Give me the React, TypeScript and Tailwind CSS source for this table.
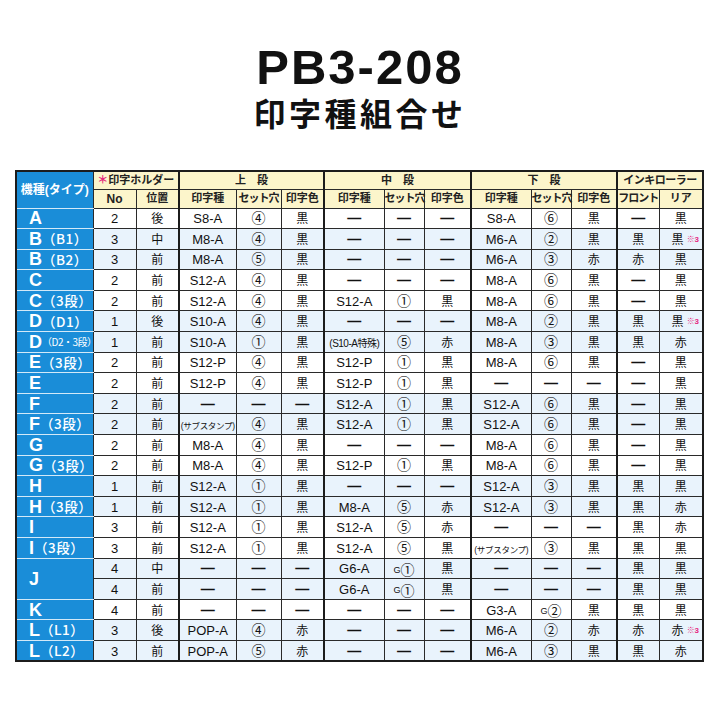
import React from "react";

const widths = [77, 43, 43, 57, 45, 43, 60, 40, 47, 60, 40, 46, 42, 44];
const thickCols = [3, 6, 9, 12];

type Row = [string | null, string, "w" | "b", ...string[]];

const rows: Row[] = [
    ["A", "", "w", "2", "後", "S8-A", "④", "黒", "—", "—", "—", "S8-A", "⑥", "黒", "—", "黒"],
    ["B", "（B1）", "b", "3", "中", "M8-A", "④", "黒", "—", "—", "—", "M6-A", "②", "黒", "黒", "黒※3"],
    ["B", "（B2）", "b", "3", "前", "M8-A", "⑤", "黒", "—", "—", "—", "M6-A", "③", "赤", "赤", "黒"],
    ["C", "", "w", "2", "前", "S12-A", "④", "黒", "—", "—", "—", "M8-A", "⑥", "黒", "—", "黒"],
    ["C", "（3段）", "w", "2", "前", "S12-A", "④", "黒", "S12-A", "①", "黒", "M8-A", "⑥", "黒", "—", "黒"],
    ["D", "（D1）", "b", "1", "後", "S10-A", "④", "黒", "—", "—", "—", "M8-A", "②", "黒", "黒", "黒※3"],
    ["D", "（D2・3段）", "b", "1", "前", "S10-A", "①", "黒", "(S10-A特殊)", "⑤", "赤", "M8-A", "③", "黒", "黒", "赤"],
    ["E", "（3段）", "w", "2", "前", "S12-P", "④", "黒", "S12-P", "①", "黒", "M8-A", "⑥", "黒", "—", "黒"],
    ["E", "", "w", "2", "前", "S12-P", "④", "黒", "S12-P", "①", "黒", "—", "—", "—", "—", "黒"],
    ["F", "", "b", "2", "前", "—", "—", "—", "S12-A", "①", "黒", "S12-A", "⑥", "黒", "—", "黒"],
    ["F", "（3段）", "b", "2", "前", "(サブスタンプ)", "④", "黒", "S12-A", "①", "黒", "S12-A", "⑥", "黒", "—", "黒"],
    ["G", "", "w", "2", "前", "M8-A", "④", "黒", "—", "—", "—", "M8-A", "⑥", "黒", "—", "黒"],
    ["G", "（3段）", "w", "2", "前", "M8-A", "④", "黒", "S12-P", "①", "黒", "M8-A", "⑥", "黒", "—", "黒"],
    ["H", "", "b", "1", "前", "S12-A", "①", "黒", "—", "—", "—", "S12-A", "③", "黒", "黒", "黒"],
    ["H", "（3段）", "b", "1", "前", "S12-A", "①", "黒", "M8-A", "⑤", "赤", "S12-A", "③", "黒", "黒", "赤"],
    ["I", "", "w", "3", "前", "S12-A", "①", "黒", "S12-A", "⑤", "赤", "—", "—", "—", "黒", "赤"],
    ["I", "（3段）", "w", "3", "前", "S12-A", "①", "黒", "S12-A", "⑤", "黒", "(サブスタンプ)", "③", "黒", "黒", "黒"],
    ["J", "", "b", "4", "中", "—", "—", "—", "G6-A", "G①", "黒", "—", "—", "—", "黒", "黒"],
    [null, "", "b", "4", "前", "—", "—", "—", "G6-A", "G①", "黒", "—", "—", "—", "黒", "黒"],
    ["K", "", "w", "4", "前", "—", "—", "—", "—", "—", "—", "G3-A", "G②", "黒", "黒", "黒"],
    ["L", "（L1）", "b", "3", "後", "POP-A", "④", "赤", "—", "—", "—", "M6-A", "②", "赤", "赤", "赤※3"],
    ["L", "（L2）", "b", "3", "前", "POP-A", "⑤", "赤", "—", "—", "—", "M6-A", "③", "黒", "黒", "赤"],
];

const circled = "①②③④⑤⑥";

function CellText({ v }: { v: string }) {
    if (v === "—") return <span className="text-[14px] font-bold">—</span>;
    if (v.startsWith("(S")) return <span className="text-[10px] tracking-[-0.5px] whitespace-nowrap">{v}</span>;
    if (v.startsWith("(")) return <span className="text-[8.5px] tracking-[-0.3px] whitespace-nowrap">{v}</span>;
    if (v.endsWith("※3")) {
        return (
            <span className="inline-flex items-center gap-[3px] pl-[9px]">
                <span className="text-[12px]">{v.slice(0, -2)}</span>
                <span className="text-[8px] font-bold text-[#e6287f]">※3</span>
            </span>
        );
    }
    if (v.startsWith("G") && circled.includes(v.slice(1))) {
        return (
            <span className="inline-flex items-center">
                <span className="text-[9px]">G</span>
                <span className="text-[14px]">{v.slice(1)}</span>
            </span>
        );
    }
    if (circled.includes(v)) return <span className="text-[14px]">{v}</span>;
    if (/^[\u4e00-\u9fff]$/.test(v)) return <span className="text-[12px]">{v}</span>;
    return <span className="text-[13px]">{v}</span>;
}

const td = "border border-[#2a2a2a] p-0 text-center align-middle leading-none whitespace-nowrap";
const thick = "border-l-2 border-l-[#1c1c1c]";
const hd =
    "border border-[#2a2a2a] p-0 text-center align-middle bg-[#fcf5cb] font-bold text-[11px] text-[#222] leading-none whitespace-nowrap";

export default function App() {
    return (
        <div className="w-[720px] h-[720px] bg-white text-[#111] [font-family:'Liberation_Sans','Noto_Sans_CJK_JP',sans-serif]">
            <div className="pt-[43px] flex flex-col items-center">
                <div className="text-[49px] leading-[49px] font-bold tracking-[2px]">PB3-208</div>
                <div className="mt-[4px] text-[32px] leading-[32px] font-bold tracking-[3.5px] [font-family:'Noto_Sans_CJK_JP',sans-serif]">
                    印字種組合せ
                </div>
            </div>
            <table className="mt-[42px] ml-[15px] w-[688px] table-fixed border-collapse border-2 border-[#1c1c1c] leading-none">
                <colgroup>
                    {widths.map((w, i) => (
                        <col key={i} style={{ width: w }} />
                    ))}
                </colgroup>
                <thead>
                    <tr className="h-[18px]">
                        <th
                            rowSpan={2}
                            className="border-r border-r-[#2a2a2a] border-b border-b-[#d3e9f8] bg-[#1a8dd8] p-0 text-[12px] font-bold leading-none text-white whitespace-nowrap"
                        >
                            機種(タイプ)
                        </th>
                        <th colSpan={2} className={hd}>
                            <span className="text-[#e6287f]">＊</span>印字ホルダー
                        </th>
                        <th colSpan={3} className={`${hd} ${thick}`}>上　段</th>
                        <th colSpan={3} className={`${hd} ${thick}`}>中　段</th>
                        <th colSpan={3} className={`${hd} ${thick}`}>下　段</th>
                        <th colSpan={2} className={`${hd} ${thick} tracking-[-0.5px]`}>インキローラー</th>
                    </tr>
                    <tr className="h-[19px]">
                        <th className={`${hd} text-[12px]`}>No</th>
                        <th className={hd}>位置</th>
                        {[0, 1, 2].map((g) => (
                            <React.Fragment key={g}>
                                <th className={`${hd} ${thick}`}>印字種</th>
                                <th className={`${hd} text-[10px] tracking-[-1px]`}>セット穴</th>
                                <th className={hd}>印字色</th>
                            </React.Fragment>
                        ))}
                        <th className={`${hd} ${thick} text-[10px] tracking-[-1px]`}>フロント</th>
                        <th className={hd}>リア</th>
                    </tr>
                </thead>
                <tbody>
                    {rows.map((r, ri) => {
                        const [label, sub, bg, ...cells] = r;
                        const bgc = bg === "b" ? "bg-[#e9f3fc]" : "bg-white";
                        return (
                            <tr key={ri} className="h-[20.6px]">
                                {label !== null && (
                                    <td
                                        rowSpan={label === "J" ? 2 : 1}
                                        className="border-r border-r-[#2a2a2a] border-b border-b-[#d3e9f8] bg-[#1a8dd8] p-0 align-middle leading-none text-white"
                                    >
                                        <div className="flex items-center pl-[12px]">
                                            <span className="text-[18px] font-bold">{label}</span>
                                            {sub && (
                                                <span
                                                    className={
                                                        sub.length > 5
                                                            ? "text-[10px] tracking-[-0.5px] whitespace-nowrap [font-family:'Noto_Sans_CJK_JP',sans-serif]"
                                                            : "text-[13.5px] font-medium tracking-[0.5px] whitespace-nowrap [font-family:'Noto_Sans_CJK_JP',sans-serif]"
                                                    }
                                                >
                                                    {sub}
                                                </span>
                                            )}
                                        </div>
                                    </td>
                                )}
                                {cells.map((c, ci) => (
                                    <td key={ci} className={`${td} ${bgc} ${thickCols.includes(ci + 1) ? thick : ""}`}>
                                        <CellText v={c} />
                                    </td>
                                ))}
                            </tr>
                        );
                    })}
                </tbody>
            </table>
        </div>
    );
}
